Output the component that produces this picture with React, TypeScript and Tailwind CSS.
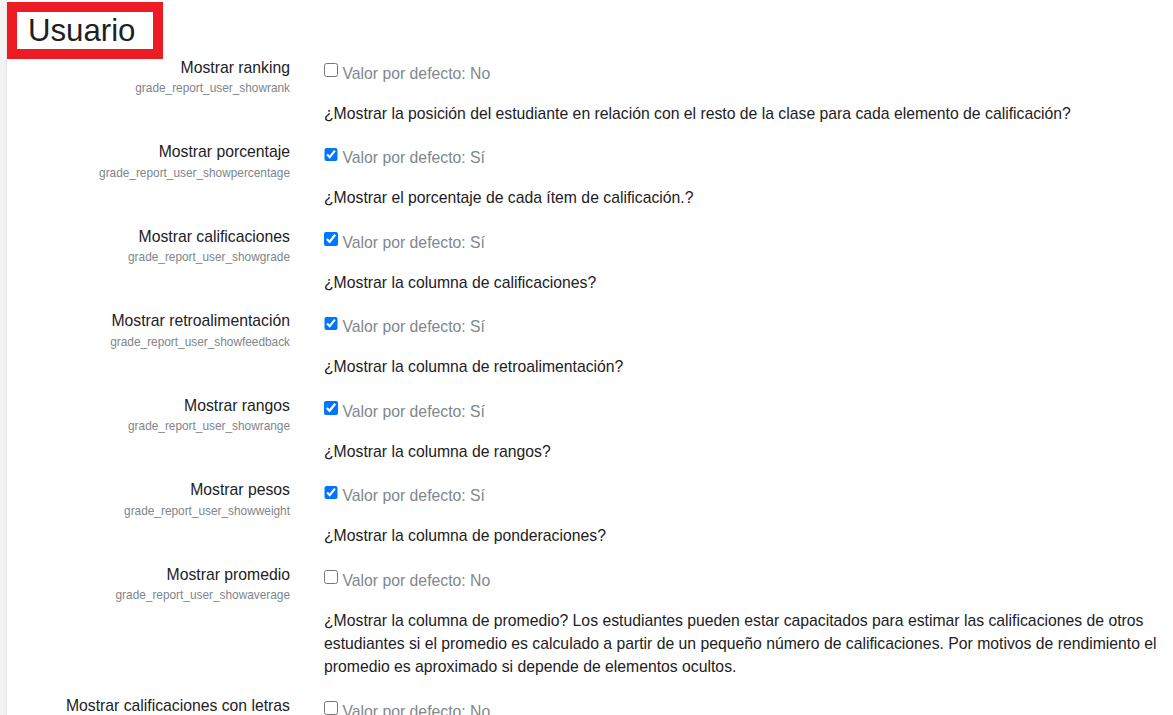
import React from "react";

type Row = {
  label: string;
  name: string;
  checked: boolean;
  desc: string;
};

const rows: Row[] = [
  {
    label: "Mostrar ranking",
    name: "grade_report_user_showrank",
    checked: false,
    desc: "¿Mostrar la posición del estudiante en relación con el resto de la clase para cada elemento de calificación?",
  },
  {
    label: "Mostrar porcentaje",
    name: "grade_report_user_showpercentage",
    checked: true,
    desc: "¿Mostrar el porcentaje de cada ítem de calificación.?",
  },
  {
    label: "Mostrar calificaciones",
    name: "grade_report_user_showgrade",
    checked: true,
    desc: "¿Mostrar la columna de calificaciones?",
  },
  {
    label: "Mostrar retroalimentación",
    name: "grade_report_user_showfeedback",
    checked: true,
    desc: "¿Mostrar la columna de retroalimentación?",
  },
  {
    label: "Mostrar rangos",
    name: "grade_report_user_showrange",
    checked: true,
    desc: "¿Mostrar la columna de rangos?",
  },
  {
    label: "Mostrar pesos",
    name: "grade_report_user_showweight",
    checked: true,
    desc: "¿Mostrar la columna de ponderaciones?",
  },
  {
    label: "Mostrar promedio",
    name: "grade_report_user_showaverage",
    checked: false,
    desc: "¿Mostrar la columna de promedio? Los estudiantes pueden estar capacitados para estimar las calificaciones de otros estudiantes si el promedio es calculado a partir de un pequeño número de calificaciones. Por motivos de rendimiento el promedio es aproximado si depende de elementos ocultos.",
  },
  {
    label: "Mostrar calificaciones con letras",
    name: "grade_report_user_showlettergrade",
    checked: false,
    desc: "¿Mostrar la columna de calificaciones con letras?",
  },
];

export default function App() {
  return (
    <div
      className="flex h-[715px] w-[1173px] overflow-hidden bg-white text-[#1d2125]"
      style={{ fontFamily: '"Liberation Sans", Arial, sans-serif' }}
    >
      <div className="w-[7px] shrink-0 border-r border-[#e6e6e6] bg-[#f3f3f3]" />
      <div className="flex min-w-0 flex-1 flex-col">
        <div className="mt-[2px] mb-[-3.5px] h-[58px] w-[156px] border-[10px] border-[#ed1c24] pl-[11px]">
          <h2 className="text-[31.2px] font-normal leading-[37px] text-[#1d2125]">Usuario</h2>
        </div>
        <div className="flex flex-col">
          {rows.map((r) => (
            <div key={r.name} className="mb-[15.1px] flex">
              <div className="flex w-[283px] shrink-0 flex-col items-end text-right">
                <div className="text-[15.75px] leading-[23.4px]">{r.label}</div>
                <div className="mt-[3.5px] text-[11.85px] leading-[13px] text-[#7e858c]">{r.name}</div>
              </div>
              <div className="ml-[34px] min-w-0 flex-1 pr-[4px]">
                <div className="flex items-start pt-[6px] text-[15.75px] leading-[23.4px] text-[#80878e]">
                  <input
                    type="checkbox"
                    defaultChecked={r.checked}
                    className="m-0 mt-[1.5px] mr-[5px] h-[13.5px] w-[13.5px] shrink-0"
                  />
                  <span>Valor por defecto: {r.checked ? "Sí" : "No"}</span>
                </div>
                <div className="mt-[16.6px] text-[15.75px] leading-[23.4px]">{r.desc}</div>
              </div>
            </div>
          ))}
        </div>
      </div>
    </div>
  );
}
